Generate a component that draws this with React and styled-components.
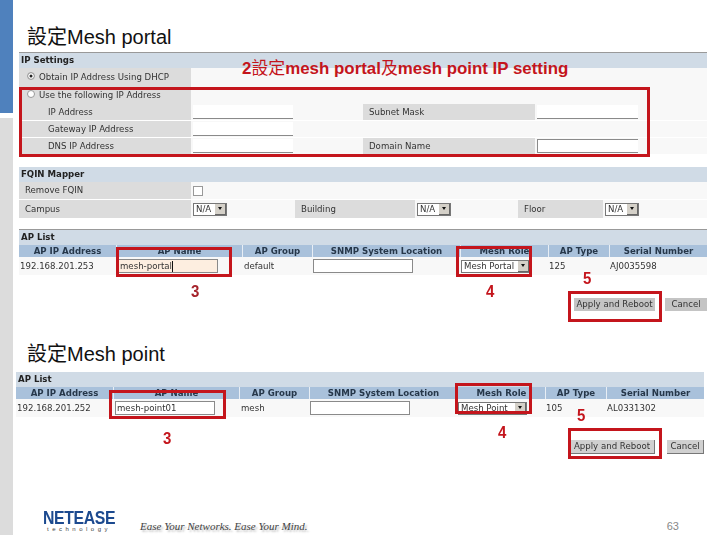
import React from "react";
import styled, { createGlobalStyle } from "styled-components";

const GlobalStyle = createGlobalStyle`
  html, body {
    margin: 0;
    padding: 0;
    background: #fff;
  }
`;

const UI_FONT = `"DejaVu Sans", Verdana, sans-serif`;
const SLIDE_FONT = `"Liberation Sans", "Noto Sans CJK TC", sans-serif`;
const RED = "#c4151c";
const COLUMNS = "97px 126px 70px 148px 88px 61px 98px";

const Slide = styled.div`
  position: relative;
  width: 720px;
  height: 540px;
  display: flex;
  overflow: hidden;
  background: #fff;
`;

const Sidebar = styled.div`
  width: 13px;
  height: 535px;
  flex: none;
  display: flex;
  flex-direction: column;
  gap: 5px;
`;

const SideBlue = styled.div`
  height: 113px;
  background: #4f81bd;
`;

const SideGray = styled.div`
  flex: 1;
  background: #dcdcdc;
`;

const Main = styled.div`
  flex: 1;
  display: flex;
  flex-direction: column;
  min-width: 0;
`;

const Title = styled.h1`
  margin: 0;
  padding-left: 14px;
  height: ${(p) => p.$height}px;
  display: flex;
  align-items: flex-end;
  font: 400 20px/25px ${SLIDE_FONT};
  color: #111;
`;

const Panel = styled.div`
  margin-left: ${(p) => p.$left}px;
  margin-top: ${(p) => p.$top}px;
  width: 688px;
  color: #333;
  font: 8.6px/1 ${UI_FONT};
  filter: blur(0.35px);
`;

const Spacer = styled.div`
  height: ${(p) => p.$height}px;
`;

const SectionHead = styled.div`
  height: 15px;
  padding-left: 2px;
  display: flex;
  align-items: center;
  background: #d0dbe6;
  border-top: ${(p) => (p.$line ? "1px solid #999" : "none")};
  font-weight: 700;
  font-size: 8.6px;
  color: #222;
`;

const FormRow = styled.div`
  display: grid;
  grid-template-columns: ${(p) => p.$columns || "172px 172px 172px 172px"};
  height: ${(p) => p.$height}px;
  margin-top: ${(p) => p.$gap || 0}px;
  background: #f8f8f8;
`;

const Label = styled.div`
  display: flex;
  align-items: center;
  padding-left: ${(p) => p.$indent ?? 6}px;
  gap: 4px;
  background: #dcdcdc;
  white-space: nowrap;
`;

const Cell = styled.div`
  display: flex;
  align-items: center;
  padding-left: 2px;
`;

const Radio = styled.span`
  width: 6px;
  height: 6px;
  border-radius: 50%;
  flex: none;
  background: #fff;
  border: 1px solid #999;
  margin-top: -3px;
  box-shadow: ${(p) => (p.$checked ? "inset 0 0 0 1.5px #fff, inset 0 0 0 4px #222" : "none")};
`;

const Field = styled.div`
  width: ${(p) => p.$width || 100}px;
  height: 14px;
  box-sizing: border-box;
  background: #fff;
  border-bottom: 1px solid #8a8a8a;
  border-top: ${(p) => (p.$boxed ? "1px solid #8a8a8a" : "none")};
  border-left: ${(p) => (p.$boxed ? "1px solid #8a8a8a" : "none")};
`;

const Checkbox = styled.span`
  width: 8px;
  height: 8px;
  background: #fff;
  border: 1px solid #999;
`;

const SelectBox = styled.div`
  width: ${(p) => p.$width}px;
  height: 13px;
  display: flex;
  align-items: center;
  justify-content: space-between;
  padding-left: 2px;
  box-sizing: border-box;
  background: #fff;
  border: 1px solid #777;
  white-space: nowrap;
  color: #333;
`;

const SelectArrow = styled.span`
  width: 11px;
  height: 11px;
  flex: none;
  display: flex;
  align-items: center;
  justify-content: center;
  background: #d4d0c8;
  border-right: 1px solid #666;
  border-bottom: 1px solid #666;
  box-sizing: border-box;

  &::after {
    content: "";
    border: 2px solid transparent;
    border-top: 3px solid #111;
    border-bottom: 0;
  }
`;

const Columns = styled.div`
  display: grid;
  grid-template-columns: ${COLUMNS};
  height: 12px;
  background: #a9c1db;
  font-weight: 700;
  color: #26374a;
`;

const ColumnTitle = styled.div`
  display: flex;
  align-items: center;
  justify-content: center;
  border-left: ${(p) => (p.$first ? "none" : "1px solid #e8eef5")};
  white-space: nowrap;
`;

const DataRow = styled.div`
  display: grid;
  grid-template-columns: ${COLUMNS};
  height: 18px;
  background: #f8f8f8;
`;

const DataCell = styled.div`
  display: flex;
  align-items: center;
  padding-left: ${(p) => p.$pad}px;
  white-space: nowrap;
`;

const TextInput = styled.div`
  width: ${(p) => p.$width || 100}px;
  height: 14px;
  box-sizing: border-box;
  display: flex;
  align-items: center;
  padding-left: 1px;
  background: ${(p) => (p.$focused ? "#fdeee0" : "#fff")};
  border: 1px solid #8a8a8a;
  color: #333;
`;

const Caret = styled.span`
  width: 1px;
  height: 11px;
  background: #111;
`;

const ButtonRow = styled.div`
  display: flex;
  justify-content: flex-end;
  gap: ${(p) => p.$gap}px;
  margin-top: ${(p) => p.$top}px;
  margin-left: ${(p) => p.$left}px;
  width: 688px;
  filter: blur(0.35px);
`;

const FormButton = styled.div`
  height: 13px;
  width: ${(p) => p.$width}px;
  display: flex;
  align-items: center;
  justify-content: center;
  background: ${(p) => (p.$raised ? "#d0d0d0" : "#c4c4c4")};
  border-right: ${(p) => (p.$raised ? "1px solid #777" : "none")};
  border-bottom: ${(p) => (p.$raised ? "1px solid #777" : "none")};
  font: 8.6px/1 ${UI_FONT};
  color: #333;
`;

const Footer = styled.div`
  margin-top: auto;
  height: 28px;
  padding: 0 0 8px 32px;
  display: flex;
  align-items: flex-end;
`;

const Logo = styled.div`
  width: 68px;
  display: flex;
  flex-direction: column;
  align-items: center;
  gap: 1px;
  color: #1c4a8f;
`;

const LogoName = styled.div`
  font: 700 18px/14px "Liberation Sans", sans-serif;
  letter-spacing: -0.4px;
  white-space: nowrap;
  transform: scaleX(0.88);
`;

const LogoSub = styled.div`
  font: 6px/6px "Liberation Sans", sans-serif;
  letter-spacing: 3.5px;
  color: #444;
  white-space: nowrap;
`;

const Tagline = styled.div`
  margin-left: 27px;
  font: italic 11px/12px "Liberation Serif", serif;
  color: #444;
  text-shadow: 2px 2px 2px #bbb;
  white-space: nowrap;
`;

const PageNumber = styled.div`
  margin-left: auto;
  margin-right: 41px;
  font: 11px/12px ${SLIDE_FONT};
  color: #888;
`;

// red annotations drawn over the screenshots
const Highlight = styled.div`
  position: absolute;
  left: ${(p) => p.$x}px;
  top: ${(p) => p.$y}px;
  width: ${(p) => p.$w}px;
  height: ${(p) => p.$h}px;
  box-sizing: border-box;
  border: 3px solid ${RED};
`;

const Step = styled.div`
  position: absolute;
  left: ${(p) => p.$x}px;
  top: ${(p) => p.$y}px;
  font: 700 15px/17px "Liberation Sans", sans-serif;
  color: ${(p) => (p.$dark ? "#a5222a" : RED)};
  transform: scaleY(1.05);
`;

const Caption = styled.div`
  position: absolute;
  left: 242px;
  top: 59px;
  font: 700 16.9px/20px ${SLIDE_FONT};
  color: ${RED};
  white-space: nowrap;

  span {
    font-weight: 400;
  }
`;

function ApTable({ head, ip, name, focused, group, role, type, serial }) {
  return (
    <>
      <SectionHead $line={head}>AP List</SectionHead>
      <Columns>
        <ColumnTitle $first>AP IP Address</ColumnTitle>
        <ColumnTitle>AP Name</ColumnTitle>
        <ColumnTitle>AP Group</ColumnTitle>
        <ColumnTitle>SNMP System Location</ColumnTitle>
        <ColumnTitle>Mesh Role</ColumnTitle>
        <ColumnTitle>AP Type</ColumnTitle>
        <ColumnTitle>Serial Number</ColumnTitle>
      </Columns>
      <DataRow>
        <DataCell $pad={1}>{ip}</DataCell>
        <DataCell $pad={2}>
          <TextInput $focused={focused}>
            {name}
            {focused && <Caret />}
          </TextInput>
        </DataCell>
        <DataCell $pad={2}>{group}</DataCell>
        <DataCell $pad={1}>
          <TextInput />
        </DataCell>
        <DataCell $pad={1}>
          <SelectBox $width={69}>
            {role}
            <SelectArrow />
          </SelectBox>
        </DataCell>
        <DataCell $pad={1}>{type}</DataCell>
        <DataCell $pad={1}>{serial}</DataCell>
      </DataRow>
    </>
  );
}

function NaSelect() {
  return (
    <Cell>
      <SelectBox $width={34}>
        N/A
        <SelectArrow />
      </SelectBox>
    </Cell>
  );
}

export default function App() {
  return (
    <>
      <GlobalStyle />
      <Slide>
        <Sidebar>
          <SideBlue />
          <SideGray />
        </Sidebar>
        <Main>
          <Title $height={50}>設定Mesh portal</Title>
          <Panel $left={6} $top={2}>
            <SectionHead $line>IP Settings</SectionHead>
            <FormRow $height={18}>
              <Label $indent={8}>
                <Radio $checked />
                Obtain IP Address Using DHCP
              </Label>
            </FormRow>
            <FormRow $height={18}>
              <Label $indent={8}>
                <Radio />
                Use the following IP Address
              </Label>
            </FormRow>
            <FormRow $height={16}>
              <Label $indent={29}>IP Address</Label>
              <Cell>
                <Field />
              </Cell>
              <Label>Subnet Mask</Label>
              <Cell>
                <Field $width={101} />
              </Cell>
            </FormRow>
            <FormRow $height={16} $gap={1}>
              <Label $indent={29}>Gateway IP Address</Label>
              <Cell>
                <Field />
              </Cell>
            </FormRow>
            <FormRow $height={16} $gap={1}>
              <Label $indent={29}>DNS IP Address</Label>
              <Cell>
                <Field />
              </Cell>
              <Label>Domain Name</Label>
              <Cell>
                <Field $width={101} $boxed />
              </Cell>
            </FormRow>

            <Spacer $height={13} />
            <SectionHead>FQIN Mapper</SectionHead>
            <FormRow $height={17}>
              <Label>Remove FQIN</Label>
              <Cell>
                <Checkbox />
              </Cell>
            </FormRow>
            <FormRow $height={18} $gap={1} $columns="172px 104px 120px 103px 85px 104px">
              <Label>Campus</Label>
              <NaSelect />
              <Label>Building</Label>
              <NaSelect />
              <Label>Floor</Label>
              <NaSelect />
            </FormRow>

            <Spacer $height={11} />
            <ApTable
              head
              ip="192.168.201.253"
              name="mesh-portal"
              focused
              group="default"
              role="Mesh Portal"
              type="125"
              serial="AJ0035598"
            />
          </Panel>
          <ButtonRow $top={23} $left={6} $gap={10}>
            <FormButton $width={81}>Apply and Reboot</FormButton>
            <FormButton $width={42}>Cancel</FormButton>
          </ButtonRow>

          <Title $height={56}>設定Mesh point</Title>
          <Panel $left={3} $top={5}>
            <ApTable
              ip="192.168.201.252"
              name="mesh-point01"
              group="mesh"
              role="Mesh Point"
              type="105"
              serial="AL0331302"
            />
          </Panel>
          <ButtonRow $top={23} $left={3} $gap={12}>
            <FormButton $width={84} $raised>
              Apply and Reboot
            </FormButton>
            <FormButton $width={36} $raised>
              Cancel
            </FormButton>
          </ButtonRow>

          <Footer>
            <Logo>
              <LogoName>NETEASE</LogoName>
              <LogoSub>technology</LogoSub>
            </Logo>
            <Tagline>Ease Your Networks. Ease Your Mind.</Tagline>
            <PageNumber>63</PageNumber>
          </Footer>
        </Main>

        <Caption>
          2<span>設定</span>mesh portal<span>及</span>mesh point IP setting
        </Caption>
        <Highlight $x={19} $y={87} $w={631} $h={70} />
        <Highlight $x={116} $y={247} $w={116} $h={30} />
        <Highlight $x={456} $y={246} $w={76} $h={31} />
        <Highlight $x={568} $y={291} $w={94} $h={31} />
        <Step $x={191} $y={283} $dark>3</Step>
        <Step $x={486} $y={283}>4</Step>
        <Step $x={583} $y={270}>5</Step>

        <Highlight $x={109} $y={390} $w={117} $h={29} />
        <Highlight $x={455} $y={383} $w={77} $h={31} />
        <Highlight $x={568} $y={428} $w={94} $h={31} />
        <Step $x={163} $y={430}>3</Step>
        <Step $x={498} $y={424}>4</Step>
        <Step $x={577} $y={407}>5</Step>
      </Slide>
    </>
  );
}
